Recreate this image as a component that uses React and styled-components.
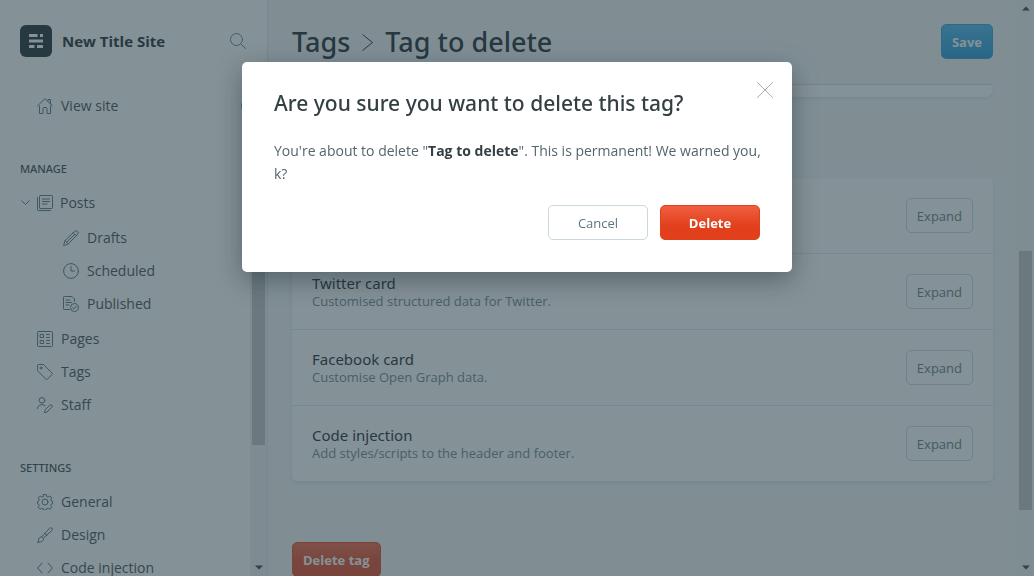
import React from "react";
import styled, { createGlobalStyle, css } from "styled-components";

const headingFont = `"Noto Sans", "Open Sans", sans-serif`;

const GlobalStyle = createGlobalStyle`
  *, *::before, *::after { box-sizing: border-box; }
  html, body { margin: 0; height: 100%; overflow: hidden; }
  body {
    font-family: "Open Sans", "Noto Sans", sans-serif;
    font-size: 14px;
    color: #343f44;
    background: #f4f8fb;
  }
  button, input { font-family: inherit; }
  h1, h2, h3, p, ul { margin: 0; padding: 0; }
  h1, h2, h3 { font-family: ${headingFont}; }
  ul { list-style: none; }
`;

const Page = styled.div`
  display: flex;
  height: 100vh;
  overflow: hidden;
`;

const Sidebar = styled.nav`
  display: flex;
  flex-direction: column;
  flex: none;
  width: 268px;
  background: #fff;
  border-right: 1px solid #dfe6ec;
`;

const SidebarScroller = styled.div`
  display: flex;
  flex: 1;
  min-height: 0;
`;

const SidebarBody = styled.div`
  flex: 1;
  min-width: 0;
  overflow: hidden;
`;

const SiteHeader = styled.header`
  display: flex;
  align-items: center;
  flex: none;
  gap: 10px;
  height: 34px;
  margin: 24px 21px 18px 20px;
`;

const SiteLogo = styled.span`
  display: flex;
  width: 32px;
  height: 32px;
`;

const SiteName = styled.strong`
  flex: 1;
  font-size: 15px;
  line-height: 20px;
  font-weight: 700;
  color: #15212a;
`;

const IconButton = styled.button`
  display: flex;
  padding: 0;
  border: 0;
  background: none;
  color: ${(p) => p.$color || "#5f7f8c"};
`;

const ViewSiteRow = styled.div`
  display: flex;
  align-items: center;
  justify-content: space-between;
  margin-top: 13px;
`;

const StatusToggle = styled.button`
  width: 16px;
  height: 16px;
  margin-right: -7px;
  padding: 0;
  border: 2px solid #3eb0ef;
  border-radius: 50%;
  background: #fff;
`;

const SectionTitle = styled.h3`
  margin: ${(p) => p.$top}px 0 0 20px;
  padding-bottom: 7px;
  font-size: 11px;
  line-height: 20px;
  font-weight: 500;
  color: #343f44;
`;

const SubList = styled.ul`
  padding: 2px 0;
`;

const NavLink = styled.a`
  display: flex;
  align-items: center;
  height: 33px;
  padding-left: ${(p) => (p.$nested ? 63 : p.$open ? 21 : 37)}px;
  gap: ${(p) => (p.$open ? 7 : 8)}px;
  font-size: 14px;
  line-height: 20px;
  color: #3a474d;
  text-decoration: none;
  svg { flex: none; color: #506f7c; }
`;

const ScrollTrack = styled.div`
  display: flex;
  flex-direction: column;
  align-items: center;
  justify-content: space-between;
  flex: none;
  width: 17px;
  padding: 6px 0;
  background: ${(p) => p.$bg};
`;

const ScrollThumb = styled.div`
  width: 13px;
  height: 46%;
  margin-top: auto;
  margin-bottom: ${(p) => p.$below}px;
  background: #c1c1c1;
`;

const Main = styled.main`
  flex: 1;
  min-width: 0;
  display: flex;
  flex-direction: column;
  padding: 0 24px;
`;

const MainHeader = styled.header`
  display: flex;
  align-items: center;
  justify-content: space-between;
  flex: none;
  height: 84px;
  padding-bottom: 1px;
`;

const Title = styled.h1`
  display: flex;
  align-items: center;
  gap: 11px;
  font-size: 27px;
  line-height: 34px;
  font-weight: 500;
  color: #15212a;
  a { color: inherit; text-decoration: none; }
`;

const Content = styled.div`
  flex: 1;
  min-height: 0;
`;

const CardEnd = styled.div`
  height: 13px;
  margin-bottom: 81px;
  background: #fff;
  border-top: 1px solid #d3dfe6;
  border-radius: 0 0 8px 8px;
  box-shadow: 0 2px 4px rgba(80, 110, 130, 0.12);
`;

const Card = styled.section`
  background: #fff;
  border-radius: 5px;
  box-shadow: 0 2px 5px rgba(80, 110, 130, 0.16);
`;

const CardRow = styled.div`
  display: flex;
  align-items: center;
  justify-content: space-between;
  min-height: 76px;
  padding: 0 20px;
  border-bottom: 1px solid #dfe8ed;
  &:last-child { border-bottom: 0; min-height: 75px; }
`;

const RowTitle = styled.h2`
  font-size: 15px;
  line-height: 18px;
  font-weight: 400;
  color: #15212a;
`;

const RowText = styled.p`
  font-size: 13px;
  line-height: 18px;
  color: #6a828d;
`;

const kinds = {
  outline: css`
    color: #5d7681;
    font-weight: 400;
    border: 1px solid #c9d9df;
    background: #fff;
  `,
  blue: css`
    color: #fff;
    border: 1px solid #2a9ddd;
    background: linear-gradient(#44b4f0, #1c93d6);
  `,
  red: css`
    color: #fff;
    border: 1px solid #e2401c;
    background: linear-gradient(#f05f40, #e2401c 60%);
  `,
};

const Button = styled.button`
  height: 35px;
  min-width: ${(p) => (p.$wide ? 100 : 0)}px;
  padding: 0 10px;
  font-size: 13px;
  line-height: 20px;
  font-weight: 700;
  border-radius: 5px;
  white-space: nowrap;
  ${(p) => kinds[p.$kind]}
`;

const DeleteArea = styled.div`
  margin-top: 61px;
`;

const Overlay = styled.div`
  position: fixed;
  inset: 0;
  display: flex;
  justify-content: center;
  align-items: flex-start;
  padding: 62px 20px;
  background: rgba(50, 72, 80, 0.6);
`;

const Dialog = styled.div`
  width: 100%;
  max-width: 550px;
  padding: 26px 19px 32px 32px;
  background: #fff;
  border-radius: 5px;
  box-shadow: 0 8px 26px rgba(20, 35, 42, 0.4);
`;

const DialogHeader = styled.header`
  display: flex;
  align-items: flex-start;
  justify-content: space-between;
  margin-bottom: 21px;
`;

const DialogTitle = styled.h1`
  font-size: 21px;
  line-height: 30px;
  font-weight: 500;
  color: #343f44;
`;

const CloseButton = styled(IconButton)`
  margin-top: -6px;
`;

const DialogText = styled.p`
  line-height: 23px;
  color: #54666d;
  strong {
    font-weight: 700;
    color: #343f44;
  }
`;

const DialogActions = styled.footer`
  display: flex;
  justify-content: flex-end;
  gap: 12px;
  margin: 20px 13px 0 0;
`;

const Icon = ({ size = 16, children }) => (
  <svg
    width={size}
    height={size}
    viewBox="0 0 16 16"
    fill="none"
    stroke="currentColor"
    strokeWidth="1"
    strokeLinecap="round"
    strokeLinejoin="round"
    aria-hidden="true"
  >
    {children}
  </svg>
);

const icons = {
  home: <path d="M.5 8 8 .7 15.500 8M11 3.500V1.500h2.500V6M2.500 8v7.500h3.500V10.500q0-1 1-1h2q1 0 1 1v5h3.500V8" />,
  posts: (
    <>
      <rect x="2.500" y=".5" width="13" height="13" rx=".8" />
      <path d="M.5 2.500V14.500q0 1 1 1H13.500M5.500 4h7M5.500 6.500h7M5.500 9h4.500" />
    </>
  ),
  drafts: <path d="M.7 15.300l1.300-4.600L11.500 1.400q1.400-1.300 2.900.1t.1 2.900L5.200 13.900zM2 10.700l3.200 3.200M10.200 2.700l3.100 3.100M11.700 4.300 4 12" />,
  scheduled: (
    <>
      <circle cx="8" cy="8" r="7.400" />
      <path d="M8 3.500V8h3.500" />
    </>
  ),
  published: (
    <>
      <path d="M6.500 13.500H1.300q-.8 0-.8-.8V1.300q0-.8.8-.8H9L11.500 3v2.500M3 4h4M3 6.500h5.500M3 9h3" />
      <circle cx="11.500" cy="11.500" r="4" />
      <path d="m9.800 11.700 1.200 1.200 2.200-2.700" />
    </>
  ),
  pages: (
    <>
      <rect x=".5" y=".5" width="15" height="15" rx="1" />
      <path d="M3.500 3.500h3v3h-3zM3.500 9.500h3v3h-3zM9.500 3.500h3M9.500 6.500h3M9.500 9.500h3M9.500 12.500h3" />
    </>
  ),
  tags: (
    <>
      <path d="M.5 1.300q0-.8.8-.8h5.200l8.700 8.700q.6.6 0 1.200L10.300 15.200q-.6.6-1.200 0L.5 6.800z" />
      <circle cx="4" cy="4" r="1" />
    </>
  ),
  staff: (
    <>
      <circle cx="5" cy="3.300" r="2.800" />
      <path d="M.5 11.500Q.7 7.700 5 7.700q1.800 0 3 1M7.500 15.500l.7-2.700 4.600-4.600q1-.9 2 0t0 2l-4.600 4.600z" />
    </>
  ),
  general: (
    <>
      <circle cx="8" cy="8" r="3" />
      <path d="M6.700.6h2.600l.5 2 1.300.5 1.800-1.100 1.900 1.900-1.100 1.800.5 1.300 1.300.4v2.400l-1.300.5-.5 1.300 1.100 1.800-1.900 1.900-1.800-1.100-1.300.5-.5 1.300H6.700l-.5-1.300-1.300-.5-1.800 1.100-1.900-1.900 1.100-1.800-.5-1.300-1.300-.5V7.400l1.300-.4.5-1.300L1.200 3.900 3.100 2l1.800 1.100 1.300-.5z" />
    </>
  ),
  design: <path d="M.7 15.300q1-.8 1-2.500c0-3.300 3.600-3.500 4.500-1.600 1 2.200-1 4.100-5.500 4.100M4.800 9.700 12.500 1.300q1-1 2.300-.3 1.300 1 .3 2.200L6.600 11M7.800 6.500l2.200 1.700" />,
  code: <path d="M5 3 .7 8 5 13M11 3l4.300 5L11 13" />,
  search: (
    <>
      <circle cx="6.500" cy="6.500" r="6" />
      <path d="m11 11 4.500 4.500" />
    </>
  ),
  close: <path d="m.5.5 15 15M15.500.5l-15 15" strokeWidth=".7" />,
};

const Arrow = ({ up }) => (
  <svg width="8" height="5" viewBox="0 0 8 5" aria-hidden="true">
    <path d={up ? "M0 4.500 4 .5 8 4.500z" : "M0 .5 4 4.500 8 .5z"} fill="#30383c" />
  </svg>
);

const NavItem = ({ icon, children, ...rest }) => (
  <li>
    <NavLink href="#" {...rest}>
      {rest.$open && (
        <svg width="9" height="6" viewBox="0 0 9 6" fill="none" stroke="currentColor" aria-hidden="true">
          <path d="m.5.5 4 4 4-4" />
        </svg>
      )}
      <Icon>{icons[icon]}</Icon>
      {children}
    </NavLink>
  </li>
);

const rows = [
  ["Meta data", "Extra content for search engines."],
  ["Twitter card", "Customised structured data for Twitter."],
  ["Facebook card", "Customise Open Graph data."],
  ["Code injection", "Add styles/scripts to the header and footer."],
];

export default function App() {
  return (
    <>
      <GlobalStyle />
      <Page>
        <Sidebar>
          <SiteHeader>
            <SiteLogo>
              <svg width="32" height="32" viewBox="0 0 32 32" aria-hidden="true">
                <rect width="32" height="32" rx="6" fill="#15212a" />
                <path
                  d="M9 9h8.500v3H9zM20 9h3v3h-3zM9 14.500h14v3H9zM9 20h5.500v3H9zM17 20h6v3h-6z"
                  fill="#fff"
                />
              </svg>
            </SiteLogo>
            <SiteName>New Title Site</SiteName>
            <IconButton aria-label="Search">
              <Icon>{icons.search}</Icon>
            </IconButton>
          </SiteHeader>
          <SidebarScroller>
            <SidebarBody>
              <ViewSiteRow>
                <ul>
                  <NavItem icon="home">View site</NavItem>
                </ul>
                <StatusToggle aria-label="Toggle" />
              </ViewSiteRow>
              <SectionTitle $top={37}>MANAGE</SectionTitle>
              <ul>
                <NavItem icon="posts" $open>Posts</NavItem>
                <li>
                  <SubList>
                    <NavItem icon="drafts" $nested>Drafts</NavItem>
                    <NavItem icon="scheduled" $nested>Scheduled</NavItem>
                    <NavItem icon="published" $nested>Published</NavItem>
                  </SubList>
                </li>
                <NavItem icon="pages">Pages</NavItem>
                <NavItem icon="tags">Tags</NavItem>
                <NavItem icon="staff">Staff</NavItem>
              </ul>
              <SectionTitle $top={37}>SETTINGS</SectionTitle>
              <ul>
                <NavItem icon="general">General</NavItem>
                <NavItem icon="design">Design</NavItem>
                <NavItem icon="code">Code injection</NavItem>
              </ul>
            </SidebarBody>
            <ScrollTrack $bg="#f1f1f1">
              <Arrow up />
              <ScrollThumb $below={120} />
              <Arrow />
            </ScrollTrack>
          </SidebarScroller>
        </Sidebar>
        <Main>
          <MainHeader>
            <Title>
              <a href="#">Tags</a>
              <svg width="13" height="18" viewBox="0 0 13 18" fill="none" stroke="currentColor" strokeWidth="1" aria-hidden="true">
                <path d="m1.500 1.500 10 8-10 8" />
              </svg>
              Tag to delete
            </Title>
            <Button $kind="blue">Save</Button>
          </MainHeader>
          <Content>
            <CardEnd />
            <Card>
              {rows.map(([title, text]) => (
                <CardRow key={title}>
                  <div>
                    <RowTitle>{title}</RowTitle>
                    <RowText>{text}</RowText>
                  </div>
                  <Button $kind="outline">Expand</Button>
                </CardRow>
              ))}
            </Card>
            <DeleteArea>
              <Button $kind="red">Delete tag</Button>
            </DeleteArea>
          </Content>
        </Main>
        <ScrollTrack $bg="#f1f4f5">
          <Arrow up />
          <ScrollThumb $below={55} />
          <Arrow />
        </ScrollTrack>
      </Page>
      <Overlay>
        <Dialog role="dialog" aria-modal="true" aria-labelledby="dialog-title">
          <DialogHeader>
            <DialogTitle id="dialog-title">Are you sure you want to delete this tag?</DialogTitle>
            <CloseButton $color="#7f8a8f" aria-label="Close">
              <Icon>{icons.close}</Icon>
            </CloseButton>
          </DialogHeader>
          <DialogText>
            You're about to delete "<strong>Tag to delete</strong>". This is permanent! We warned you, k?
          </DialogText>
          <DialogActions>
            <Button $kind="outline" $wide>Cancel</Button>
            <Button $kind="red" $wide>Delete</Button>
          </DialogActions>
        </Dialog>
      </Overlay>
    </>
  );
}
